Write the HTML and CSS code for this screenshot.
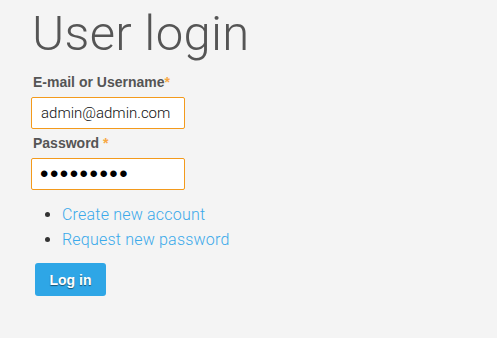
FILE: index.html
```html
<!DOCTYPE html>
<html>
<head>
<meta charset="utf-8">
<link rel="stylesheet" href="styles.css">
</head>
<body>
<main class="page">
  <h1 class="title">User login</h1>
  <form class="login-form">
    <div class="field">
      <label class="label">E-mail or Username<span class="req">*</span></label>
      <input class="input" type="text" value="admin@admin.com">
    </div>
    <div class="field">
      <label class="label">Password <span class="req">*</span></label>
      <input class="input password" type="password" value="123456789">
    </div>
    <ul class="links">
      <li><a href="#">Create new account</a></li>
      <li><a href="#">Request new password</a></li>
    </ul>
    <button class="btn" type="button">Log in</button>
  </form>
</main>
</body>
</html>
```
FILE: styles.css
```css
html, body {
  margin: 0;
  padding: 0;
  background: #f4f4f4;
}
body {
  font-family: Roboto, "Liberation Sans", sans-serif;
  color: #555;
}
.page {
  padding: 6px 0 0 31px;
}
.title {
  margin: 0 0 0 1px;
  font-family: Roboto, sans-serif;
  font-weight: 300;
  font-size: 49px;
  line-height: 56px;
  color: #555;
  letter-spacing: 0.3px;
}
.login-form {
  margin-top: 11px;
}
.field {
  display: flex;
  flex-direction: column;
  align-items: flex-start;
}
.label {
  font-family: "Liberation Sans", Arial, sans-serif;
  font-weight: bold;
  font-size: 14px;
  line-height: 18px;
  color: #555;
  margin: 0 0 6px 2px;
}
.req {
  color: #f7a843;
  font-weight: bold;
}
.input {
  box-sizing: border-box;
  width: 154px;
  height: 32px;
  margin: 0 0 5px 0;
  padding: 0 6px 0 9px;
  border: 1px solid #f39a1c;
  border-radius: 2px;
  background: #fff;
  font-family: Roboto, sans-serif;
  font-weight: 300;
  font-size: 15px;
  color: #111;
  outline: none;
}
.password {
  font-family: "Liberation Sans", Arial, sans-serif;
  font-size: 24px;
  letter-spacing: 1.5px;
  color: #000;
  padding-left: 8px;
}
.links {
  margin: 7px 0 0 0;
  padding: 0 0 0 31px;
  list-style: disc;
  color: #333;
}
.links li {
  font-family: Roboto, sans-serif;
  font-weight: 300;
  font-size: 16px;
  line-height: 25px;
  letter-spacing: 0.2px;
}
.links a {
  color: #3aa9ea;
  text-decoration: none;
}
.btn {
  margin: 11px 0 0 4px;
  width: 71px;
  height: 33px;
  border: none;
  border-radius: 3px;
  background: #2ea6e6;
  color: #fff;
  font-family: "Liberation Sans", Arial, sans-serif;
  font-weight: bold;
  font-size: 14px;
  text-shadow: 0 1px 1px rgba(0,0,0,0.5);
  padding: 0;
}
```
